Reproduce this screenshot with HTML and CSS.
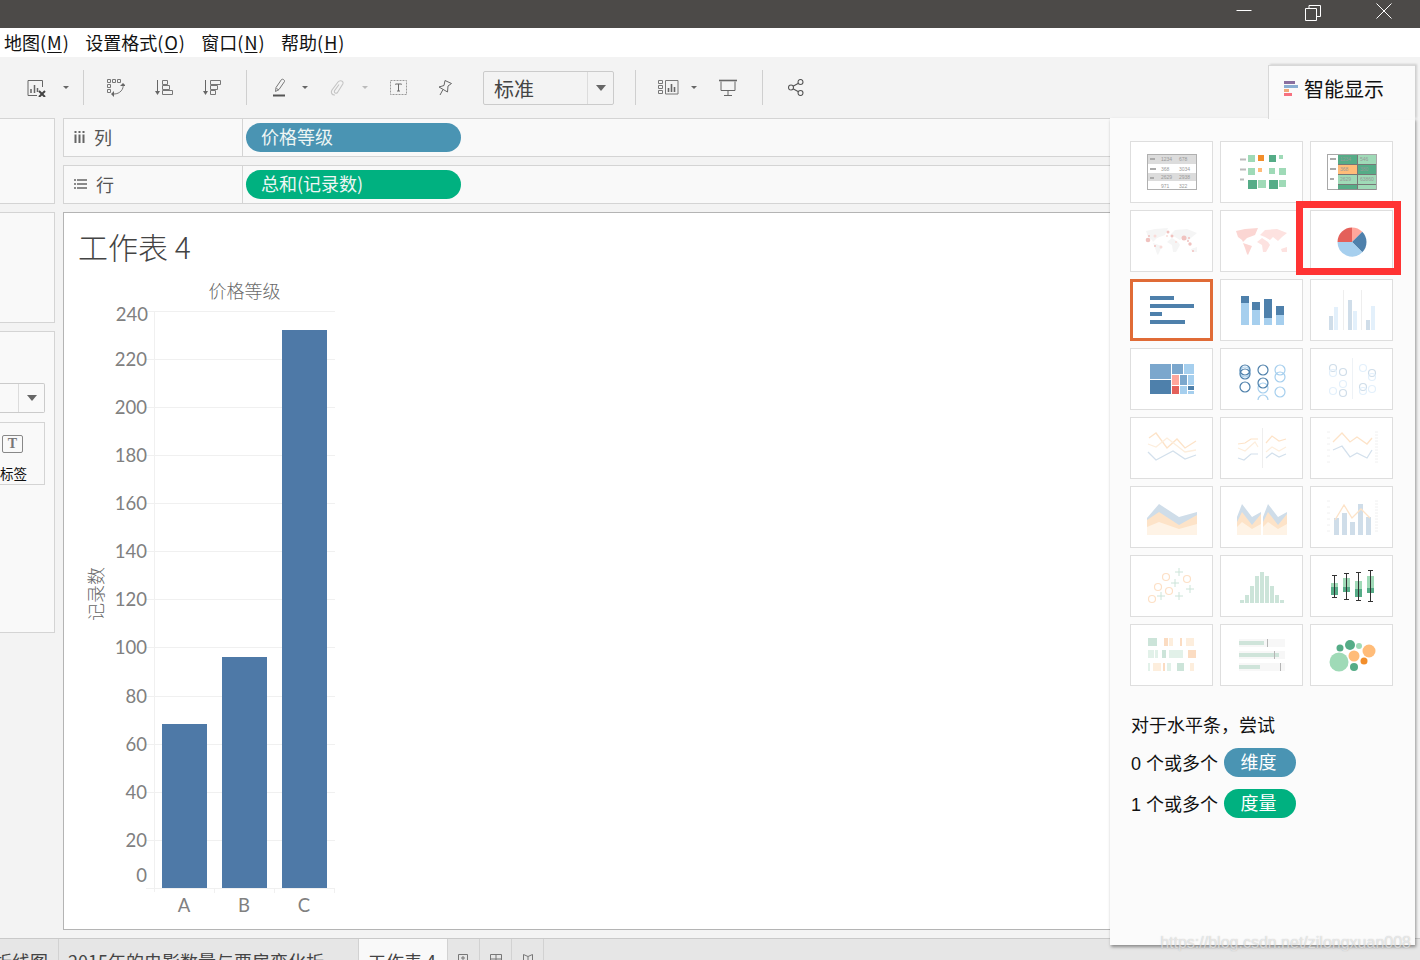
FILE: index.html
```html
<!DOCTYPE html>
<html lang="zh-CN">
<head>
<meta charset="utf-8">
<title>工作表 4</title>
<link rel="stylesheet" href="styles.css">
</head>
<body>
<div class="app">
  <header class="titlebar">
    <button class="win-btn" aria-label="最小化"><svg width="20" height="16" viewBox="0 0 20 16"><path d="M4.500 7.500H19.500" stroke="#fff"/></svg></button>
    <button class="win-btn" aria-label="还原"><svg width="16" height="18" viewBox="0 0 16 18"><path d="M.5 5.500h11v12H.5zM4 5.500V2.500h11.500v11h-4" fill="none" stroke="#fff"/></svg></button>
    <button class="win-btn" aria-label="关闭"><svg width="16" height="16" viewBox="0 0 16 16"><path d="M.5 .5L15.500 15.500M15.500 .5L.5 15.500" stroke="#fff"/></svg></button>
  </header>
  <nav class="menubar">
    <span>地图(<u>M</u>)</span><span>设置格式(<u>O</u>)</span><span>窗口(<u>N</u>)</span><span>帮助(<u>H</u>)</span>
  </nav>
  <div class="toolbar">
    <svg width="20" height="18" viewBox="0 0 20 18"><path d="M15.500 8V1.500H1V16.500H10" fill="none" stroke="#666"/><path d="M4 10v4M7.500 6v8M10.500 9v4" stroke="#666" stroke-width="1.500"/><path d="M12 12l6 6M18 12l-6 6" stroke="#444" stroke-width="2"/></svg>
    <i class="caret"></i>
    <i class="sep"></i>
    <svg width="18" height="18" viewBox="0 0 18 18"><g fill="none" stroke="#777"><path d="M.5 .5h3v3h-3zM5.500 .5h3v3h-3zM10.500 .5h3v3h-3zM.5 5.500h3v3h-3zM.5 10.500h3v3h-3z"/><path d="M16 5.500C17 10 13 15 7 15"/></g><path d="M13 7h6l-3-3zM7 12v6l-3-3z" fill="#666"/></svg>
    <svg width="18" height="16" viewBox="0 0 18 16"><g fill="none" stroke="#666"><path d="M2.500 0V12"/><path d="M7.500 .5h5v4h-5zM7.500 5.500h7v4h-7zM7.500 10.500h10v4h-10z" stroke="#777"/></g><path d="M0 11h5l-2.500 4z" fill="#666"/></svg>
    <svg width="18" height="16" viewBox="0 0 18 16"><g fill="none" stroke="#666"><path d="M2.500 0V12"/><path d="M7.500 .5h10v4h-10zM7.500 5.500h7v4h-7zM7.500 10.500h5v4h-5z" stroke="#777"/></g><path d="M0 11h5l-2.500 4z" fill="#666"/></svg>
    <i class="sep"></i>
    <svg width="14" height="19" viewBox="0 0 14 19"><path d="M3 9.500L8.500 1.500C9.500 .5 12 2 11.500 3.500L6 11.500L2.500 13.500Z" fill="none" stroke="#777"/><path d="M3.500 10.500L6 12" stroke="#777"/><path d="M0 17.500H12" stroke="#555" stroke-width="2"/></svg>
    <i class="caret"></i>
    <svg width="14" height="16" viewBox="0 0 14 16"><path d="M5 15C2 15.500 .5 12.500 2 10L8 2C10 -.5 14 1 12.800 4L7.500 12.500C6 14 3.800 13 4.500 10.800L9 4.500" fill="none" stroke="#c4c4c4" stroke-width="1.100"/></svg>
    <i class="caret caret-faint"></i>
    <svg width="18" height="16" viewBox="0 0 18 16"><rect x=".5" y=".5" width="16" height="14" fill="none" stroke="#999" stroke-dasharray="2 1"/><path d="M5.500 4.500V4h6v.5M8.500 4v7M7 11h3" fill="none" stroke="#666"/></svg>
    <svg width="15" height="16" viewBox="0 0 15 16"><path d="M7 .5L13.500 3.500L10 6L9.500 12L1 7L6 5.500ZM5 9.500L2 15" fill="none" stroke="#666"/></svg>
    <div class="select"><span class="select-text">标准</span><span class="select-arrow"><i></i></span></div>
    <i class="sep"></i>
    <svg width="21" height="15" viewBox="0 0 21 15"><path d="M.5 .5h4v3h-4zM.5 5.500h4v3h-4zM.5 10.500h4v3h-4zM7.500 .5h12.500v13.500H7.500z" fill="none" stroke="#777"/><path d="M10.500 8v4M13.500 4v8M16.500 7v5" stroke="#666" stroke-width="1.600"/></svg>
    <i class="caret"></i>
    <svg width="18" height="17" viewBox="0 0 18 17"><path d="M2 2.500V11.500H16V2.500M9 11.500V16M5 16.500H13" fill="none" stroke="#666"/><path d="M0 1.500H18" stroke="#666" stroke-width="1.600"/></svg>
    <i class="sep"></i>
    <svg width="16" height="17" viewBox="0 0 16 17"><g fill="none" stroke="#555" stroke-width="1.100"><circle cx="3" cy="8.500" r="2.500"/><circle cx="12.500" cy="3" r="2.500"/><circle cx="12.500" cy="14" r="2.500"/><path d="M5 7.200L10.500 4.200M5 9.800L10.500 12.800"/></g></svg>
  </div>
  <main class="workspace">
    <aside class="left-col">
      <section class="side-panel side-a"></section>
      <section class="side-panel side-b"></section>
      <section class="side-panel side-c">
        <div class="mini-select"><span class="mini-arrow"><i></i></span></div>
        <div class="mark-card">
          <span class="mark-icon">T</span>
          <span class="mark-label">标签</span>
        </div>
      </section>
    </aside>
    <div class="canvas-col">
      <div class="shelf">
        <div class="shelf-label">
          <svg width="11" height="12" viewBox="0 0 11 12"><path d="M1.500 0v2M5.500 0v2M9.500 0v2M1.500 3.500V12M5.500 3.500V12M9.500 3.500V12" stroke="#666" stroke-width="2"/></svg>
          <span>列</span>
        </div>
        <div class="shelf-body"><span class="pill pill-dim">价格等级</span></div>
      </div>
      <div class="shelf">
        <div class="shelf-label">
          <svg width="13" height="12" viewBox="0 0 13 12"><path d="M0 2h2M3 2h10M0 6h2M3 6h10M0 10h2M3 10h10" stroke="#666" stroke-width="1.500"/></svg>
          <span>行</span>
        </div>
        <div class="shelf-body"><span class="pill pill-mea">总和(记录数)</span></div>
      </div>
      <section class="sheet">
        <h1 class="sheet-title">工作表 4</h1>
        <svg class="chart" width="300" height="650" viewBox="64 272 300 650">
          <text class="c-head" x="244.500" y="298" text-anchor="middle">价格等级</text>
          <g stroke="#f0f0f0">
            <path d="M154.500 311V892"/>
            <path d="M146 311.500H335M146 359.500H335M146 407.500H335M146 455.500H335M146 503.500H335M146 551.500H335M146 599.500H335M146 647.500H335M146 696.500H335M146 744.500H335M146 792.500H335M146 840.500H335M146 888.500H335"/>
            <path d="M214.500 888V893M274.500 888V893M334.500 888V893"/>
          </g>
          <rect class="bar" x="162" y="724" width="45" height="164"/>
          <rect class="bar" x="222" y="657" width="45" height="231"/>
          <rect class="bar" x="282" y="330" width="45" height="558"/>
          <g class="c-tick" text-anchor="end">
            <text x="148" y="321">240</text><text x="147" y="366">220</text><text x="147" y="414">200</text><text x="147" y="462">180</text><text x="147" y="510">160</text><text x="147" y="558">140</text><text x="147" y="606">120</text><text x="147" y="654">100</text><text x="147" y="703">80</text><text x="147" y="751">60</text><text x="147" y="799">40</text><text x="147" y="847">20</text><text x="147" y="882">0</text>
          </g>
          <g class="c-tick" text-anchor="middle">
            <text x="184" y="912">A</text><text x="244" y="912">B</text><text x="304" y="912">C</text>
          </g>
          <text class="c-axis" transform="translate(103 594) rotate(-90)" text-anchor="middle">记录数</text>
        </svg>
      </section>
    </div>
  </main>
  <footer class="tabs">
    <span class="tab tab-a">折线图</span>
    <span class="tab tab-b">2015年的电影数量与票房变化折</span>
    <span class="tab tab-active">工作表 4</span>
    <span class="tab tab-icon"><svg width="11" height="12" viewBox="0 0 11 12"><path d="M.5 .5h9v11h-9zM5 2v4M3 4h4" fill="none" stroke="#777"/></svg></span>
    <span class="tab tab-icon"><svg width="12" height="12" viewBox="0 0 12 12"><path d="M.5 .5h11v11H.5zM6 .5v11M.5 5h11" fill="none" stroke="#777"/></svg></span>
    <span class="tab tab-icon"><svg width="12" height="12" viewBox="0 0 12 12"><path d="M1.500 .5L6 2.500L10.500 .5V11.500H1.500ZM6 2.500V8" fill="none" stroke="#777"/></svg></span>
  </footer>

  <aside class="showme">
    <div class="showme-tab">
      <svg width="14" height="15" viewBox="0 0 14 15"><rect width="11" height="3" fill="#8a6f9f"/><rect y="4" width="14" height="3" fill="#8aaed2"/><rect y="8" width="5" height="3" fill="#f0a878"/><rect y="12" width="8" height="3" fill="#f7707f"/></svg>
      <span>智能显示</span>
    </div>
    <div class="showme-body">
      <div class="tile-grid">
        <div class="tile"><svg viewBox="0 0 83 62">
          <rect x="17.500" y="13.500" width="49" height="35" fill="#fff" stroke="#b0b0b0"/>
          <rect x="18" y="14" width="48" height="9" fill="#dcdcdc"/><rect x="18" y="32" width="48" height="8" fill="#dcdcdc"/>
          <path d="M20 18h5M20 28h6M20 37h4" stroke="#aaa" stroke-width="2"/>
          <g class="tiny"><text x="31" y="20">1234</text><text x="49" y="20">678</text><text x="31" y="30">368</text><text x="49" y="30">3034</text><text x="31" y="38">2629</text><text x="49" y="38">2938</text><text x="31" y="47">971</text><text x="49" y="47">322</text></g>
        </svg></div>
        <div class="tile"><svg viewBox="0 0 83 62">
          <path d="M20 18.500h6M20 28.500h6M20 38.500h4" stroke="#bbb" stroke-width="2"/>
          <rect x="28" y="14" width="7" height="7" fill="#9fdab7"/><rect x="38" y="14" width="6" height="6" fill="#f28e2b"/><rect x="49" y="14" width="7" height="7" fill="#55ac87"/><rect x="59" y="14" width="4" height="4" fill="#9fdab7"/>
          <rect x="28" y="27" width="7" height="7" fill="#9fdab7"/><rect x="38" y="27" width="4" height="4" fill="#ffbc79"/><rect x="49" y="27" width="6" height="6" fill="#9fdab7"/><rect x="59" y="27" width="7" height="7" fill="#9fdab7"/>
          <rect x="28" y="39" width="9" height="9" fill="#55ac87"/><rect x="38" y="39" width="8" height="8" fill="#9fdab7"/><rect x="49" y="39" width="9" height="9" fill="#55ac87"/><rect x="59" y="39" width="7" height="7" fill="#9fdab7"/>
        </svg></div>
        <div class="tile"><svg viewBox="0 0 83 62">
          <rect x="17.500" y="13.500" width="49" height="35" fill="#fff" stroke="#a8a8a8"/>
          <rect x="28" y="14" width="38" height="34.500" fill="#777"/>
          <rect x="28" y="14" width="19" height="9" fill="#55ac87"/><rect x="48" y="14" width="18" height="9" fill="#9fdab7"/>
          <rect x="28" y="24" width="19" height="9" fill="#ffbc79"/><rect x="48" y="24" width="18" height="9" fill="#55ac87"/>
          <rect x="28" y="34" width="19" height="9" fill="#9fdab7"/><rect x="48" y="34" width="18" height="9" fill="#9fdab7"/>
          <rect x="28" y="44" width="19" height="4" fill="#55ac87"/><rect x="48" y="44" width="18" height="4" fill="#9fdab7"/>
          <path d="M20 18h6M20 28h6M20 38h4" stroke="#aaa" stroke-width="2"/>
          <g class="tiny"><text x="30" y="20">1234</text><text x="50" y="20">546</text><text x="30" y="30">368</text><text x="50" y="30">380</text><text x="30" y="40">2629</text><text x="50" y="40">63860</text></g>
        </svg></div>
        <div class="tile"><svg viewBox="0 0 83 62">
          <path d="M16 21L25 19L38 18L35 25L27 28L23 32L22 30L18 27ZM23 33L32 36L28 45L27 44L25 38ZM40 25L45 20L57 19L67 23L62 27L58 31L53 27L50 30L45 27ZM37 32L42 28L48 32L50 35L46 42L43 42L42 35ZM61 39L67 37L67 42L62 42Z" fill="#f5f5f5"/>
          <g fill="#f0c2bf"><circle cx="18" cy="30" r="2.300"/><circle cx="19" cy="26" r="1"/><circle cx="38" cy="22" r="1.500"/><circle cx="42" cy="26" r="1.500"/><circle cx="54" cy="28" r="2.500"/><circle cx="59" cy="28" r="1"/><circle cx="58" cy="31" r="1"/><circle cx="60" cy="34" r="1.700"/><circle cx="63" cy="41" r="1"/><circle cx="25" cy="36" r="1"/></g>
          <g fill="#f9dcd9"><circle cx="25" cy="26" r="1.500"/><circle cx="37" cy="26" r="1"/><circle cx="31" cy="37" r="1.500"/><circle cx="46" cy="32" r="1"/></g>
        </svg></div>
        <div class="tile"><svg viewBox="0 0 83 62">
          <path d="M16 21L25 19L38 18L35 25L27 28L23 32L22 30L18 27ZM23 33L32 36L28 45L27 44L25 38Z" fill="#fbd6d3"/>
          <path d="M40 25L45 20L57 19L67 23L62 27L58 31L53 27L50 30L45 27ZM37 32L42 28L48 32L50 35L46 42L43 42L42 35ZM61 39L67 37L67 42L62 42Z" fill="#fde2e0"/>
        </svg></div>
        <div class="tile"><svg viewBox="0 0 83 62">
          <path d="M42 32V17.500A14.500 14.500 0 0 1 52.250 21.750Z" fill="#ffa69c"/>
          <path d="M42 32L52.250 21.750A14.500 14.500 0 0 1 52.250 42.250Z" fill="#4e80ab"/>
          <path d="M42 32L52.250 42.250A14.500 14.500 0 0 1 27.500 32Z" fill="#a6cfee"/>
          <path d="M42 32H27.500A14.500 14.500 0 0 1 42 17.500Z" fill="#e4605a"/>
        </svg></div>
        <div class="tile tile-on"><svg viewBox="0 0 83 62"><g fill="#4e80ab"><rect x="20" y="17" width="24" height="4"/><rect x="20" y="25" width="44" height="4"/><rect x="20" y="33" width="12" height="4"/><rect x="20" y="41" width="35" height="4"/></g></svg></div>
        <div class="tile"><svg viewBox="0 0 83 62">
          <g fill="#a6cfee"><rect x="21" y="24" width="8" height="22"/><rect x="32" y="31" width="8" height="15"/><rect x="44" y="39" width="8" height="7"/><rect x="56" y="36" width="8" height="10"/></g>
          <g fill="#4e80ab"><rect x="21" y="17" width="8" height="7"/><rect x="32" y="23" width="8" height="8"/><rect x="44" y="20" width="8" height="19"/><rect x="56" y="27" width="8" height="9"/></g>
        </svg></div>
        <div class="tile"><svg viewBox="0 0 83 62">
          <path d="M33.500 11V51M51.500 11V51" stroke="#eee"/>
          <g fill="#cfdde9"><rect x="19" y="37" width="4" height="14"/><rect x="38" y="21" width="4" height="30"/><rect x="56" y="41" width="4" height="10"/></g>
          <g fill="#e3f0fb"><rect x="24" y="28" width="4" height="23"/><rect x="43" y="32" width="4" height="19"/><rect x="61" y="27" width="4" height="24"/></g>
        </svg></div>
        <div class="tile"><svg viewBox="0 0 83 62">
          <rect x="20" y="16" width="21" height="15" fill="#7ba7cd"/><rect x="20" y="32" width="21" height="14" fill="#4e80ab"/>
          <rect x="42" y="16" width="11" height="10" fill="#7ba7cd"/><rect x="54" y="16" width="10" height="10" fill="#a6cfee"/>
          <rect x="42" y="27" width="7" height="10" fill="#ffa69c"/><rect x="42" y="38" width="7" height="8" fill="#e4605a"/>
          <rect x="50" y="27" width="7" height="10" fill="#7ba7cd"/><rect x="58" y="27" width="6" height="10" fill="#a6cfee"/>
          <rect x="50" y="38" width="7" height="8" fill="#a6cfee"/><rect x="58" y="38" width="6" height="4" fill="#4e80ab"/><rect x="58" y="43" width="6" height="3" fill="#a6cfee"/>
        </svg></div>
        <div class="tile"><svg viewBox="0 0 83 62"><g fill="none" stroke-width="1.200">
          <g stroke="#a6cfee"><circle cx="25" cy="24" r="5"/><circle cx="43" cy="40" r="5"/><path d="M38 52A5 5 0 0 1 48 52"/><circle cx="60" cy="22" r="5"/><circle cx="60" cy="29" r="5"/><circle cx="60" cy="44" r="5"/></g>
          <g stroke="#4e80ab"><circle cx="25" cy="22" r="5"/><circle cx="25" cy="26" r="5"/><circle cx="25" cy="39" r="5"/><circle cx="43" cy="22" r="5"/><circle cx="43" cy="35" r="5"/></g>
        </g></svg></div>
        <div class="tile"><svg viewBox="0 0 83 62"><path d="M42.500 10V51" stroke="#eef2f6"/><g fill="none" stroke-width="1.200">
          <g stroke="#cfdde9"><circle cx="23" cy="20" r="3.500"/><circle cx="33" cy="24" r="3.500"/><circle cx="33" cy="45" r="3.500"/><circle cx="62" cy="25" r="3.500"/><circle cx="53" cy="39" r="3.500"/></g>
          <g stroke="#e3f0fb"><circle cx="23" cy="25" r="3.500"/><circle cx="33" cy="36" r="3.500"/><circle cx="23" cy="43" r="3.500"/><circle cx="53" cy="20" r="3.500"/><circle cx="62" cy="29" r="3.500"/><circle cx="53" cy="43" r="3.500"/><circle cx="62" cy="41" r="3.500"/></g>
        </g></svg></div>
        <div class="tile"><svg viewBox="0 0 83 62"><g fill="none" stroke-width="1.300">
          <path d="M19 21L26 16L37 31L47 22L55 31L66 24" stroke="#fde3c8"/><path d="M18 27L26 30L37 21L55 35L66 33" stroke="#fdeedd"/><path d="M18 35L26 43L43 34L55 42L66 38" stroke="#d3e0ec"/>
        </g></svg></div>
        <div class="tile"><svg viewBox="0 0 83 62"><path d="M42.500 11V51" stroke="#eee"/><g fill="none" stroke-width="1.200">
          <path d="M18 27L25 26L31 22L38 22M46 26L52 19L59 24L66 22" stroke="#fde3c8"/><path d="M18 31L25 34L35 25L38 30M46 35L52 30L59 34L66 30" stroke="#fdeedd"/><path d="M18 41L24 43L31 37L38 37M46 41L52 36L59 40L66 37" stroke="#d3e0ec"/>
        </g></svg></div>
        <div class="tile"><svg viewBox="0 0 83 62">
          <path d="M17 15h3M17 21h3M17 27h3M17 33h3M17 39h3M17 45h3M65 15h3M65 18h3M65 21h3M65 24h3M65 27h3M65 30h3M65 33h3M65 36h3M65 39h3M65 42h3M65 45h3" stroke="#f0f0f0"/>
          <g fill="none" stroke-width="1.300"><path d="M23 25L32 16L40 25L47 20L57 27L62 21" stroke="#fde3c8"/><path d="M23 33L32 29L40 40L47 36L57 41L62 33" stroke="#d3e0ec"/></g>
        </svg></div>
        <div class="tile"><svg viewBox="0 0 83 62">
          <path d="M17 32L29 18L49 31L67 26V49H17Z" fill="#cfdde9"/><path d="M17 34L29 26L49 39L67 29V49H17Z" fill="#fde3c8"/><path d="M17 41L29 36L49 43L67 38V49H17Z" fill="#fef3e6"/>
        </svg></div>
        <div class="tile"><svg viewBox="0 0 83 62">
          <path d="M17 31L22 18L32 31L41 26V49H17ZM43 31L48 18L58 31L67 26V49H43Z" fill="#cfdde9"/><path d="M17 36L22 26L32 39L41 28V49H17ZM43 36L48 26L58 39L67 28V49H43Z" fill="#fde3c8"/><path d="M17 41L22 36L32 43L41 38V49H17ZM43 41L48 36L58 43L67 38V49H43Z" fill="#fef3e6"/>
        </svg></div>
        <div class="tile"><svg viewBox="0 0 83 62">
          <path d="M17 15h3M17 21h3M17 27h3M17 33h3M17 39h3M17 45h3M65 15h3M65 18h3M65 21h3M65 24h3M65 27h3M65 30h3M65 33h3M65 36h3M65 39h3M65 42h3M65 45h3" stroke="#f0f0f0"/>
          <g fill="#cfdde9"><rect x="24" y="32" width="5" height="17"/><rect x="32" y="27" width="5" height="22"/><rect x="40" y="36" width="5" height="13"/><rect x="48" y="18" width="5" height="31"/><rect x="56" y="31" width="5" height="18"/></g>
          <path d="M25 34L34 19L42 32L51 23L60 32" fill="none" stroke="#fde3c8" stroke-width="1.300"/>
        </svg></div>
        <div class="tile"><svg viewBox="0 0 83 62"><g fill="none" stroke="#fde0c6" stroke-width="1.200"><circle cx="22" cy="44" r="3.500"/><circle cx="28" cy="32" r="3.500"/><circle cx="39" cy="36" r="3.500"/><circle cx="36" cy="22" r="3.500"/><circle cx="57" cy="24" r="3.500"/></g><path d="M27 41h8M31 37v8M45 41h8M49 37v8M41 28h8M45 24v8M45 17h8M49 13v8M56 34h8M60 30v8" stroke="#cce4d9"/></svg></div>
        <div class="tile"><svg viewBox="0 0 83 62"><g fill="#cce4d9"><rect x="20" y="45" width="4" height="3"/><rect x="25" y="40" width="4" height="8"/><rect x="30" y="31" width="4" height="17"/><rect x="35" y="21" width="4" height="27"/><rect x="40" y="17" width="4" height="31"/><rect x="45" y="21" width="4" height="27"/><rect x="50" y="31" width="4" height="17"/><rect x="55" y="40" width="4" height="8"/><rect x="60" y="45" width="4" height="3"/></g></svg></div>
        <div class="tile"><svg viewBox="0 0 83 62">
          <g fill="#9fdab7"><rect x="21" y="28" width="7" height="4"/><rect x="33" y="23" width="7" height="9"/><rect x="45" y="26" width="7" height="8"/><rect x="57" y="21" width="7" height="12"/></g>
          <g fill="#55ac87"><rect x="21" y="32" width="7" height="8"/><rect x="33" y="32" width="7" height="5"/><rect x="45" y="34" width="7" height="8"/><rect x="57" y="33" width="7" height="5"/></g>
          <path d="M24.500 20V43M22 20.500h5M22 42.500h5M36.500 18V45M34 18.500h5M34 44.500h5M48.500 17V46M46 17.500h5M46 45.500h5M60.500 15V47M58 15.500h5M58 46.500h5" stroke="#333" fill="none"/>
        </svg></div>
        <div class="tile"><svg viewBox="0 0 83 62">
          <g fill="#cce4d9"><rect x="18" y="14" width="9" height="8"/><rect x="32" y="26" width="4" height="8"/><rect x="47" y="39" width="7" height="8"/></g>
          <g fill="#fbdcc2"><rect x="34" y="14" width="4" height="8"/><rect x="50" y="14" width="2" height="8"/><rect x="58" y="26" width="8" height="8"/><rect x="33" y="39" width="2" height="8"/></g>
          <g fill="#fdeedd"><rect x="39" y="14" width="4" height="8"/><rect x="56" y="14" width="8" height="8"/><rect x="23" y="39" width="8" height="8"/><rect x="60" y="39" width="4" height="8"/></g>
          <g fill="#e2f1e9"><rect x="18" y="26" width="6" height="8"/><rect x="25" y="26" width="3" height="8"/><rect x="39" y="26" width="14" height="8"/><rect x="18" y="39" width="2" height="8"/><rect x="37" y="39" width="4" height="8"/></g>
        </svg></div>
        <div class="tile"><svg viewBox="0 0 83 62">
          <g fill="#f7f7f7"><rect x="19" y="15" width="46" height="8"/><rect x="19" y="27" width="46" height="8"/><rect x="19" y="39" width="46" height="8"/></g>
          <g fill="#cfe4da"><rect x="19" y="17" width="25" height="4"/><rect x="19" y="29" width="40" height="4"/><rect x="19" y="41" width="21" height="4"/></g>
          <path d="M47.500 15V23M54.500 27V35M60.500 39V47" stroke="#b5b5b5"/>
        </svg></div>
        <div class="tile"><svg viewBox="0 0 83 62">
          <circle cx="29" cy="38" r="9.500" fill="#9fdab7"/><circle cx="30" cy="24" r="3.500" fill="#55ac87"/><circle cx="40" cy="21" r="5" fill="#55ac87"/><circle cx="49" cy="22" r="3" fill="#9fdab7"/><circle cx="59" cy="27" r="6.500" fill="#ffbc79"/><circle cx="44" cy="32" r="5.500" fill="#ffbc79"/><circle cx="54" cy="37" r="3.500" fill="#f28e2b"/><circle cx="44" cy="43" r="4" fill="#55ac87"/>
        </svg></div>
        <div class="callout"></div>
      </div>
      <div class="hint">
        <p class="hint-line hint-title">对于水平条，尝试</p>
        <p class="hint-line">0 个或多个<span class="pill hint-pill pill-dim">维度</span></p>
        <p class="hint-line">1 个或多个<span class="pill hint-pill pill-mea">度量</span></p>
      </div>
    </div>
    <span class="watermark">https://blog.csdn.net/zilongxuan008</span>
  </aside>
</div>
</body>
</html>
```
FILE: styles.css
```css
* { box-sizing: border-box; }
html, body { margin: 0; padding: 0; }
body {
  width: 1420px;
  height: 960px;
  overflow: hidden;
  background: #f3f3f3;
  font-family: "Noto Sans CJK SC", "Liberation Sans", sans-serif;
  color: #222;
}
svg { display: block; }
.app {
  position: relative;
  display: grid;
  grid-template-rows: 28px 29px 61px 820px 22px;
  width: 1420px;
  height: 960px;
  overflow: hidden;
}

/* title bar */
.titlebar {
  display: flex;
  justify-content: flex-end;
  padding-right: 1px;
  background: #4c4a48;
}
.win-btn {
  display: flex;
  justify-content: center;
  width: 71px;
  height: 28px;
  padding: 3px 0 0;
  border: 0;
  background: none;
}

/* menu */
.menubar {
  display: flex;
  align-items: center;
  gap: 16.500px;
  padding-left: 4px;
  background: #fff;
  font-size: 18px;
  line-height: 29px;
  color: #111;
}
.menubar u { margin: 0 1px; text-underline-offset: 2px; }

/* toolbar */
.toolbar {
  display: grid;
  grid-template-columns: 36px 20px 24px 48px 48px 43px 27px 29px 28px 32px 28px 48px 45px 152px 23px 33px 28px 43px 26px auto;
  align-items: center;
  height: 61px;
  padding: 0 0 0 27px;
  background: #f3f3f3;
}
.caret {
  display: block;
  width: 0;
  height: 0;
  border-left: 3px solid transparent;
  border-right: 3px solid transparent;
  border-top: 3px solid #666;
}
.caret-faint { border-top-color: #bbb; }
.sep {
  display: block;
  width: 1px;
  height: 35px;
  background: #cfcfcf;
}
.select {
  display: flex;
  width: 131px;
  height: 34px;
  margin-top: 1px;
  border: 1px solid #cbcbcb;
  border-radius: 2px;
}
.select-text {
  flex: 1;
  padding-left: 10px;
  font-size: 20px;
  line-height: 34px;
  color: #444;
}
.select-arrow {
  display: flex;
  align-items: center;
  justify-content: center;
  width: 26px;
  border-left: 1px solid #dcdcdc;
}
.select-arrow i, .mini-arrow i {
  display: block;
  width: 0;
  height: 0;
  border-left: 5px solid transparent;
  border-right: 5px solid transparent;
  border-top: 6px solid #666;
}

/* workspace */
.workspace {
  display: grid;
  grid-template-columns: 55px 1349px;
  column-gap: 8px;
  background: #f3f3f3;
  overflow: hidden;
}
.left-col, .canvas-col {
  display: flex;
  flex-direction: column;
  gap: 8px;
}
.side-panel {
  border: 1px solid #d4d4d4;
  border-left: 0;
  background: #f9f9f9;
}
.side-a { height: 86px; }
.side-b { height: 111px; }
.side-c { height: 302px; padding-top: 51px; }
.mini-select {
  display: flex;
  justify-content: flex-end;
  width: 45px;
  height: 30px;
  border: 1px solid #cbcbcb;
  border-left: 0;
  border-radius: 0 2px 2px 0;
}
.mini-arrow {
  display: flex;
  align-items: center;
  justify-content: center;
  width: 26px;
  border-left: 1px solid #dcdcdc;
}
.mark-card {
  display: flex;
  flex-direction: column;
  align-items: flex-start;
  width: 45px;
  height: 63px;
  margin-top: 9px;
  border: 1px solid #d4d4d4;
  border-left: 0;
  padding: 12px 0 0 2px;
}
.mark-icon {
  width: 21px;
  height: 18px;
  border: 1px solid #888;
  border-radius: 2px;
  font-family: "Liberation Serif", serif;
  font-size: 14px;
  font-weight: 700;
  line-height: 16px;
  text-align: center;
  color: #777;
}
.mark-label {
  margin: 11px 0 0 -2px;
  font-size: 13.500px;
  line-height: 18px;
  color: #111;
}

/* shelves */
.shelf {
  display: flex;
  flex: none;
  height: 39px;
  border: 1px solid #d4d4d4;
  background: #f9f9f9;
}
.shelf-label {
  display: flex;
  align-items: center;
  gap: 9px;
  width: 179px;
  padding: 0 0 1px 10px;
  border-right: 1px solid #d4d4d4;
  font-size: 18px;
  color: #555;
}
.shelf-body {
  display: flex;
  align-items: center;
  padding-left: 3px;
}
.pill {
  display: inline-block;
  width: 215px;
  height: 29px;
  padding-left: 15px;
  border-radius: 15px;
  font-size: 18px;
  line-height: 27px;
  color: #eef6f4;
}
.pill-dim { background: #4a94b3; }
.pill-mea { background: #00b180; }

/* sheet */
.sheet {
  flex: none;
  height: 718px;
  border: 1px solid #b4b4b4;
  background: #fff;
}
.sheet-title {
  margin: 0;
  padding: 13px 0 0 14px;
  height: 59px;
  font-size: 30px;
  font-weight: 300;
  line-height: 40px;
  color: #444;
}
.chart { overflow: visible; }
.bar { fill: #4e79a7; }
.c-head { font-size: 18px; font-weight: 300; fill: #6a6a6a; }
.c-axis { font-size: 18px; font-weight: 300; fill: #666; }
.c-tick { font-family: Lato, "Open Sans", sans-serif; font-size: 18.500px; fill: #808080; }

/* tabs */
.tabs {
  display: flex;
  border-top: 1px solid #c9c9c9;
  background: #e6e6e6;
  overflow: hidden;
}
.tab {
  flex: none;
  height: 22px;
  border-right: 1px solid #d2d2d2;
  padding-left: 9px;
  font-size: 18px;
  line-height: 44px;
  color: #444;
  white-space: nowrap;
  overflow: hidden;
}
.tab-a { width: 59px; padding-left: 0; text-indent: -6px; }
.tab-b { width: 300px; }
.tab-active { width: 89px; background: #f9f9f9; }
.tab-icon { width: 32px; padding: 15px 0 0 10px; }

/* show me */
.showme {
  position: absolute;
  top: 65px;
  right: 5px;
  display: flex;
  flex-direction: column;
  align-items: flex-end;
  width: 305px;
  height: 880px;
}
.showme-tab {
  display: flex;
  align-items: center;
  gap: 6px;
  width: 147px;
  height: 54px;
  margin-bottom: -1px;
  padding: 0 0 8px 15px;
  border-top: 1px solid #d8d8d8;
  border-left: 1px solid #d8d8d8;
  background: #fafafa;
  box-shadow: 2px -1px 2px rgba(0, 0, 0, .15);
  position: relative;
  z-index: 1;
  font-size: 20px;
  color: #111;
}
.showme-body {
  flex: 1;
  width: 305px;
  padding: 23px 0 0 20px;
  background: #fbfbfb;
  box-shadow: 1px 2px 3px rgba(0, 0, 0, .4);
}
.tile-grid {
  position: relative;
  display: grid;
  grid-template-columns: repeat(3, 83px);
  grid-auto-rows: 62px;
  gap: 7px;
}
.tile {
  background: #fff;
  outline: 1px solid #dedede;
  outline-offset: -1px;
}
.tile svg { width: 83px; height: 62px; }
.tile-on { outline: 3px solid #e06b36; outline-offset: -3px; }
.tiny { font-family: "Liberation Sans", sans-serif; font-size: 5px; fill: #999; }
.callout {
  position: absolute;
  top: 60px;
  left: 166px;
  width: 105px;
  height: 74px;
  border: 7px solid #ff3333;
}
.hint { padding: 26px 0 0 1px; }
.hint-line {
  display: flex;
  align-items: center;
  gap: 6px;
  height: 29px;
  margin: 0 0 12px;
  padding-bottom: 2px;
  font-family: "Liberation Sans", "Noto Sans CJK SC", sans-serif;
  font-size: 18px;
  color: #111;
}
.hint-title { height: 24px; margin-bottom: 12px; padding-bottom: 0; font-family: "Noto Sans CJK SC", sans-serif; }
.hint-pill {
  width: 72px;
  margin-bottom: -2px;
  padding: 0 3px 0 0;
  text-align: center;
  color: #fff;
  font-family: "Noto Sans CJK SC", sans-serif;
}
.watermark {
  position: absolute;
  right: 4px;
  bottom: -7px;
  font-family: "Liberation Sans", sans-serif;
  font-size: 16px;
  white-space: nowrap;
  color: rgba(255, 255, 255, .6);
  text-shadow: 0 0 1px rgba(120, 120, 120, .5);
}
```
